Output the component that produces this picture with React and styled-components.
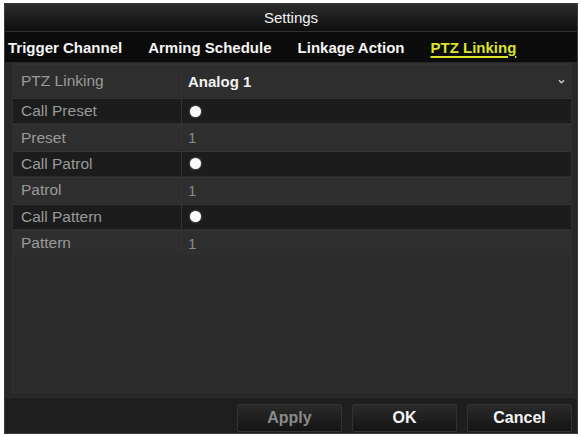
import React from 'react';
import styled, { createGlobalStyle } from 'styled-components';

const GlobalStyle = createGlobalStyle`
  html, body {
    margin: 0;
    padding: 0;
    background: #ffffff;
  }
  body {
    font-family: "Liberation Sans", Arial, sans-serif;
  }
`;

const TABS = ['Trigger Channel', 'Arming Schedule', 'Linkage Action', 'PTZ Linking'];

const ROWS = [
  { label: 'PTZ Linking', kind: 'select', value: 'Analog 1', tall: true },
  { label: 'Call Preset', kind: 'check', dark: true },
  { label: 'Preset', kind: 'num', value: '1' },
  { label: 'Call Patrol', kind: 'check', dark: true },
  { label: 'Patrol', kind: 'num', value: '1' },
  { label: 'Call Pattern', kind: 'check', dark: true },
  { label: 'Pattern', kind: 'num', value: '1' },
];

export default function App() {
  return (
    <>
      <GlobalStyle />
      <Window>
        <TitleBar>Settings</TitleBar>
        <TabBar>
          {TABS.map((t, i) => (
            <Tab key={t} $active={i === TABS.length - 1}>
              {t}
            </Tab>
          ))}
        </TabBar>
        <Body>
          <Panel>
            {ROWS.map((r) => (
              <Row key={r.label} $dark={r.dark} $tall={r.tall}>
                <Label>{r.label}</Label>
                <Value $kind={r.kind}>
                  {r.kind === 'check' ? <Dot /> : r.value}
                  {r.kind === 'select' && (
                    <Arrow viewBox="0 0 8 6">
                      <path d="M1 1.5 L4 4.5 L7 1.5" fill="none" stroke="#cfcfcf" strokeWidth="1.6" />
                    </Arrow>
                  )}
                </Value>
              </Row>
            ))}
          </Panel>
        </Body>
        <Footer>
          <Button $disabled>Apply</Button>
          <Button>OK</Button>
          <Button>Cancel</Button>
        </Footer>
      </Window>
    </>
  );
}

const Window = styled.div`
  margin: 3px 0 0 4px;
  width: 574px;
  height: 431px;
  display: flex;
  flex-direction: column;
  background: #262626;
  border: 1px solid #3a3a3a;
  box-sizing: border-box;
  overflow: hidden;
`;

const TitleBar = styled.div`
  height: 27px;
  flex: none;
  display: flex;
  align-items: center;
  justify-content: center;
  color: #f2f2f2;
  font-size: 15px;
  background: linear-gradient(#2c2c2c, #0e0e0e);
  border-bottom: 1px solid #303030;
`;

const TabBar = styled.div`
  height: 30px;
  flex: none;
  display: flex;
  align-items: center;
  gap: 26px;
  padding: 0 3px;
  background: #0b0b0b;
`;

const Tab = styled.div`
  font-size: 15px;
  font-weight: bold;
  color: ${(p) => (p.$active ? '#dbe32a' : '#f4f4f4')};
  text-decoration: ${(p) => (p.$active ? 'underline' : 'none')};
  text-underline-offset: 3px;
  text-decoration-thickness: 2px;
`;

const Body = styled.div`
  flex: 1;
  padding: 1px 5px 4px 7px;
  background: #282828;
  display: flex;
`;

const Panel = styled.div`
  flex: 1;
  display: flex;
  flex-direction: column;
  gap: 1px;
  background: #2b2b2b;
  border: 1px solid #303030;
`;

const Row = styled.div`
  height: ${(p) => (p.$tall ? '32px' : '24.4px')};
  flex: none;
  display: grid;
  grid-template-columns: 169px 1fr;
  background: ${(p) => (p.$dark ? '#1c1c1c' : '#2e2e2e')};
  border-top: 1px solid #353535;
`;

const Label = styled.div`
  display: flex;
  align-items: center;
  padding-left: 8px;
  font-size: 15.5px;
  color: #9a9a9a;
  border-right: 1px solid #333;
`;

const Value = styled.div`
  position: relative;
  display: flex;
  align-items: center;
  padding-left: 6px;
  font-size: 15px;
  color: ${(p) => (p.$kind === 'select' ? '#f2f2f2' : '#8a8a8a')};
  font-weight: ${(p) => (p.$kind === 'select' ? 'bold' : 'normal')};
`;

const Dot = styled.span`
  width: 11px;
  height: 11px;
  margin-left: 2px;
  border-radius: 50%;
  background: #fafafa;
  box-shadow: 0 0 2px rgba(255, 255, 255, 0.6);
`;

const Arrow = styled.svg`
  position: absolute;
  right: 6px;
  top: 50%;
  width: 7px;
  height: 5px;
  margin-top: -2px;
`;

const Footer = styled.div`
  height: 36px;
  flex: none;
  display: flex;
  justify-content: flex-end;
  align-items: flex-end;
  gap: 10px;
  padding: 0 5px 1px 0;
  background: #1e1e1e;
  border-top: 1px solid #2c2c2c;
  box-sizing: border-box;
`;

const Button = styled.div`
  width: 105px;
  height: 28px;
  display: flex;
  align-items: center;
  justify-content: center;
  font-size: 16px;
  font-weight: bold;
  color: ${(p) => (p.$disabled ? '#8a8a8a' : '#f4f4f4')};
  background: linear-gradient(#2a2a2a, #141414);
  border: 1px solid #333;
  border-radius: 2px;
  box-sizing: border-box;
`;
